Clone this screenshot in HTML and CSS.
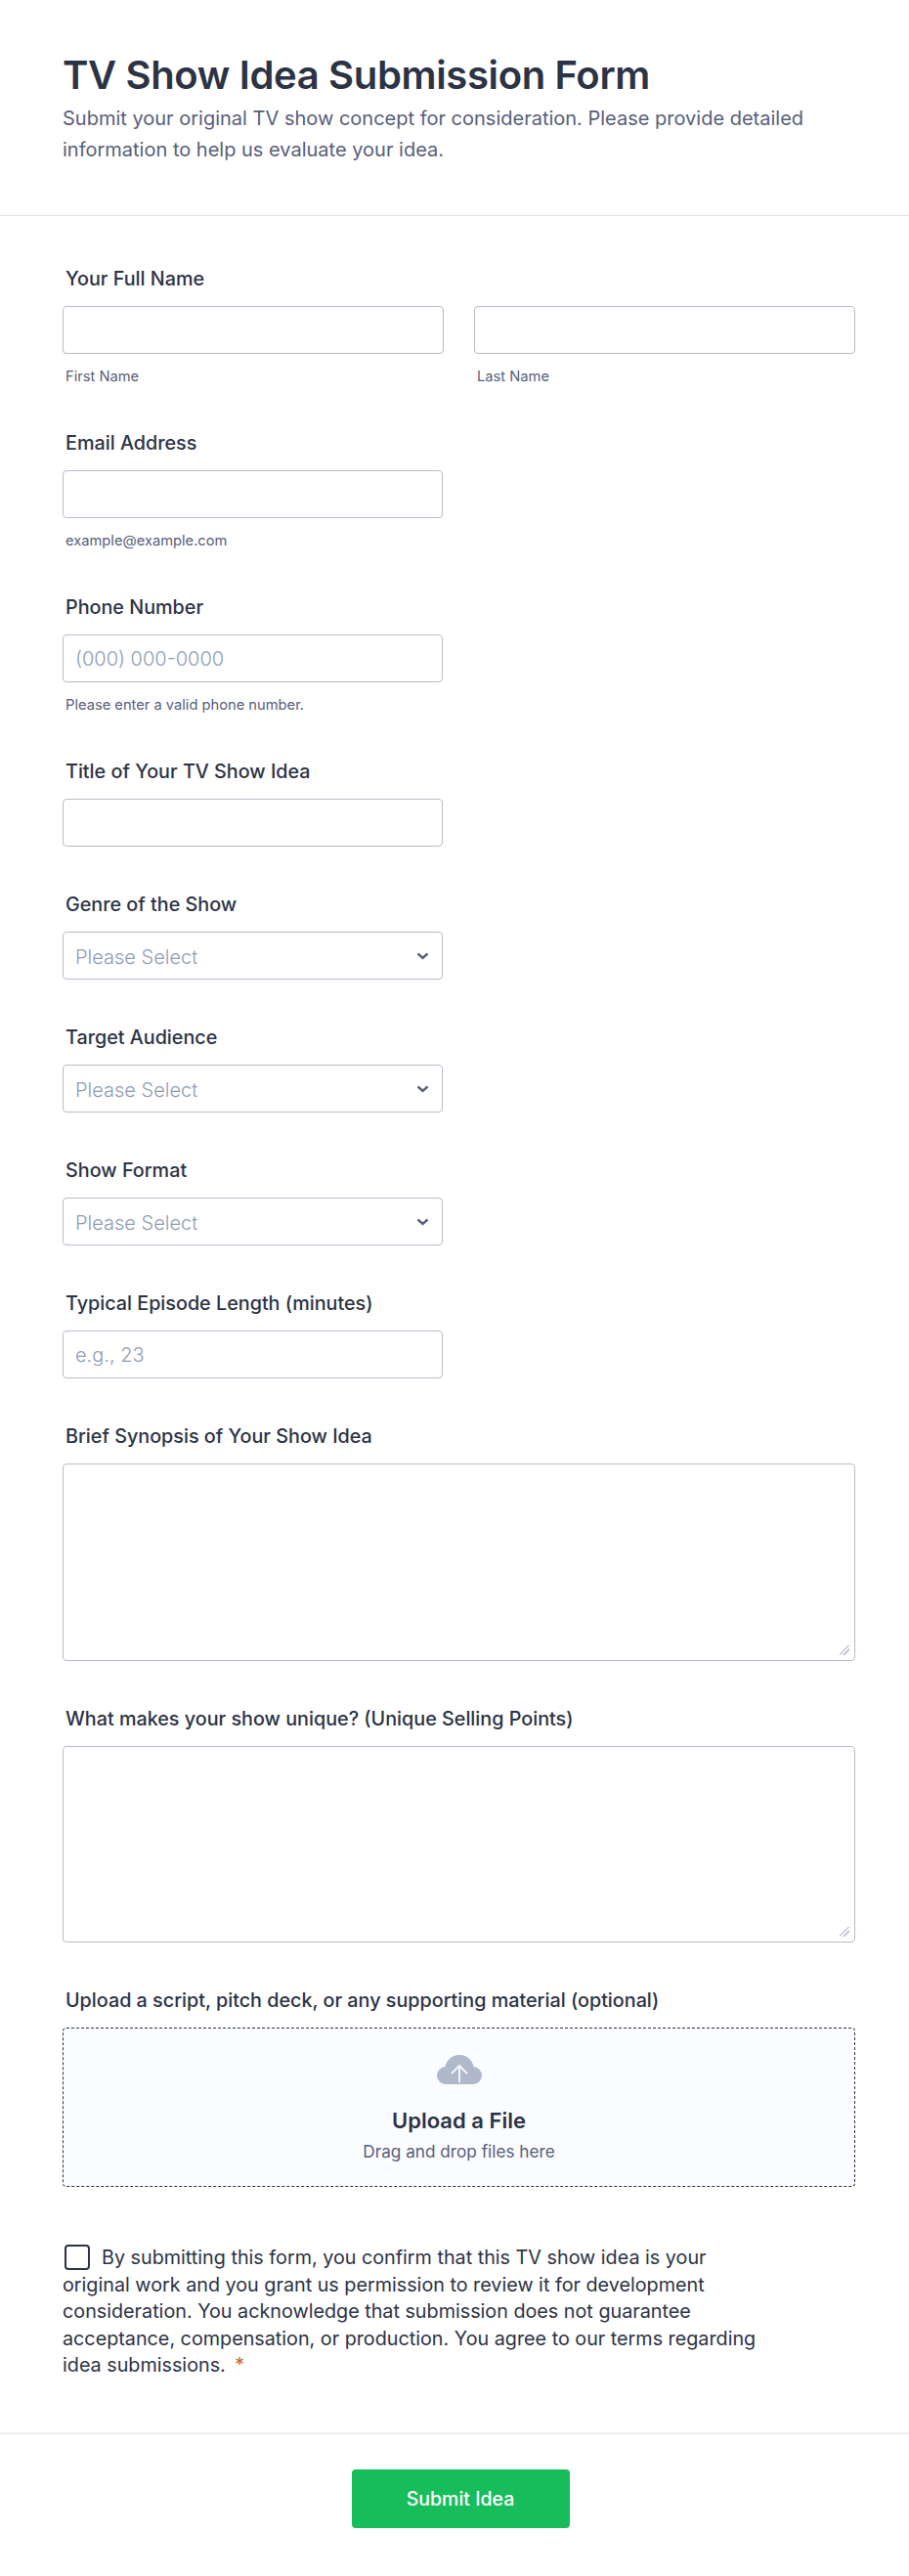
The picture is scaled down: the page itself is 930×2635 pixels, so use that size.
FILE: index.html
```html
<!DOCTYPE html>
<html lang="en">
<head>
    <meta charset="UTF-8">
    <meta name="viewport" content="width=device-width, initial-scale=1.0">
    <title>TV Show Idea Submission Form</title>
    <link rel="stylesheet" href="styles.css">
</head>
<body>
    <form class="form-card">
        <header class="form-header">
            <h1>TV Show Idea Submission Form</h1>
            <p>Submit your original TV show concept for consideration. Please provide detailed information to help us evaluate your idea.</p>
        </header>

        <div class="form-body">
            <div class="field">
                <label class="field-label">Your Full Name</label>
                <div class="name-row">
                    <div class="name-col">
                        <input class="text-input" type="text">
                        <span class="sublabel">First Name</span>
                    </div>
                    <div class="name-col">
                        <input class="text-input" type="text">
                        <span class="sublabel">Last Name</span>
                    </div>
                </div>
            </div>

            <div class="field">
                <label class="field-label">Email Address</label>
                <input class="text-input short" type="email">
                <span class="sublabel">example@example.com</span>
            </div>

            <div class="field">
                <label class="field-label">Phone Number</label>
                <input class="text-input short" type="tel" placeholder="(000) 000-0000">
                <span class="sublabel">Please enter a valid phone number.</span>
            </div>

            <div class="field">
                <label class="field-label">Title of Your TV Show Idea</label>
                <input class="text-input short" type="text">
            </div>

            <div class="field">
                <label class="field-label">Genre of the Show</label>
                <div class="select-box">
                    <span>Please Select</span>
                    <svg class="chevron" viewBox="0 0 13 8"><path d="M1.500 1.500 6.500 6l5-4.500" /></svg>
                </div>
            </div>

            <div class="field">
                <label class="field-label">Target Audience</label>
                <div class="select-box">
                    <span>Please Select</span>
                    <svg class="chevron" viewBox="0 0 13 8"><path d="M1.500 1.500 6.500 6l5-4.500" /></svg>
                </div>
            </div>

            <div class="field">
                <label class="field-label">Show Format</label>
                <div class="select-box">
                    <span>Please Select</span>
                    <svg class="chevron" viewBox="0 0 13 8"><path d="M1.500 1.500 6.500 6l5-4.500" /></svg>
                </div>
            </div>

            <div class="field">
                <label class="field-label">Typical Episode Length (minutes)</label>
                <input class="text-input short" type="text" placeholder="e.g., 23">
            </div>

            <div class="field">
                <label class="field-label">Brief Synopsis of Your Show Idea</label>
                <textarea class="text-area"></textarea>
            </div>

            <div class="field">
                <label class="field-label">What makes your show unique? (Unique Selling Points)</label>
                <textarea class="text-area"></textarea>
            </div>

            <div class="field">
                <label class="field-label">Upload a script, pitch deck, or any supporting material (optional)</label>
                <div class="upload-box">
                    <svg class="cloud" viewBox="0 0 46 30">
                        <circle class="cloud-fill" cx="23" cy="15" r="15" />
                        <circle class="cloud-fill" cx="9" cy="21" r="9" />
                        <circle class="cloud-fill" cx="37" cy="21" r="9" />
                        <rect class="cloud-fill" x="9" y="15" width="28" height="15" />
                        <path class="cloud-arrow" d="M23 28V11M15 19l8-8 8 8" />
                    </svg>
                    <strong>Upload a File</strong>
                    <span>Drag and drop files here</span>
                </div>
            </div>

            <div class="consent">
                <label class="consent-text">
                    <input class="checkbox" type="checkbox">By submitting this form, you confirm that this TV show idea is your original work and you grant us permission to review it for development consideration. You acknowledge that submission does not guarantee acceptance, compensation, or production. You agree to our terms regarding idea submissions. <span class="required">*</span>
                </label>
            </div>
        </div>

        <footer class="form-footer">
            <button class="submit-btn" type="button">Submit Idea</button>
        </footer>
    </form>
</body>
</html>
```

FILE: styles.css
```css
* {
    box-sizing: border-box;
}

body {
    margin: 0;
    background: #fff;
    font-family: Inter, "Noto Sans", sans-serif;
    color: #2c3345;
}

.form-card {
    background: #fff;
}

.form-header {
    height: 221px;
    padding: 52px 64px 0;
    border-bottom: 1px solid #dfe2ea;
}

.form-header h1 {
    margin: 0;
    font-size: 40px;
    font-weight: 600;
    letter-spacing: -0.35px;
    line-height: 50px;
    color: #2c3345;
}

.form-header p {
    margin: 3px 0 0;
    max-width: 802px;
    font-size: 20px;
    line-height: 32px;
    color: #57607a;
}

.form-body {
    padding: 50px 55px 0 64px;
}

.field {
    margin-bottom: 45px;
}

.field-label {
    display: block;
    margin: 0 0 14px 3px;
    font-size: 19.750px;
    font-weight: 500;
    line-height: 28px;
    color: #2c3345;
}

.name-row {
    display: flex;
    gap: 31px;
}

.name-col {
    flex: 1;
}

.text-input {
    display: block;
    width: 100%;
    height: 49px;
    padding: 0 12px;
    border: 1px solid #b8bdc9;
    border-radius: 4px;
    background: #fff;
    font-family: inherit;
    font-size: 20px;
}

.text-input.short {
    width: 389px;
}

.text-input::placeholder {
    color: #8f9db5;
    opacity: 1;
    font-weight: 300;
}

.sublabel {
    display: block;
    margin: 14px 0 0 3px;
    font-size: 14.700px;
    line-height: 18px;
    color: #57607a;
}

.select-box {
    display: flex;
    align-items: center;
    justify-content: space-between;
    width: 389px;
    height: 49px;
    padding: 1px 13px 0 12px;
    border: 1px solid #b8bdc9;
    border-radius: 4px;
    font-size: 20px;
    font-weight: 300;
    color: #8f9db5;
}

.select-box span {
    padding-top: 2px;
}

.chevron {
    width: 13px;
    height: 8px;
    fill: none;
    stroke: #57607a;
    stroke-width: 2.400;
}

.text-area {
    display: block;
    width: 100%;
    height: 201.500px;
    border: 1px solid #b8bdc9;
    border-radius: 4px;
    background: #fff;
    resize: vertical;
}

.text-area::-webkit-resizer {
    background: linear-gradient(135deg, transparent 42%, #c4c8d4 42%, #c4c8d4 54%, transparent 54%, transparent 64%, #c4c8d4 64%, #c4c8d4 76%, transparent 76%) 0 0 / 10px 10px no-repeat;
}

.upload-box {
    display: flex;
    flex-direction: column;
    align-items: center;
    height: 163px;
    padding-top: 27px;
    border: 1px dashed #2c3345;
    border-radius: 4px;
    background: #fbfcff;
}

.cloud {
    width: 46px;
    height: 30px;
}

.cloud-fill {
    fill: #b0b9ca;
}

.cloud-arrow {
    fill: none;
    stroke: #f3f5fa;
    stroke-width: 2;
}

.upload-box strong {
    margin-top: 23px;
    font-size: 22px;
    font-weight: 600;
    line-height: 28px;
    color: #2c3345;
}

.upload-box span {
    margin-top: 6px;
    font-size: 17.200px;
    line-height: 24px;
    color: #57607a;
}

.consent {
    margin-top: 59px;
    max-width: 715px;
}

.consent-text {
    display: block;
    font-size: 19.750px;
    line-height: 27.500px;
    color: #2c3345;
}

.checkbox {
    appearance: none;
    width: 26px;
    height: 26px;
    margin: 0 12px 0 2px;
    border: 2px solid #2c3345;
    border-radius: 4px;
    background: #fff;
    vertical-align: -6px;
}

.required {
    margin-left: 4px;
    color: #c2691f;
}

.form-footer {
    margin-top: 54.500px;
    padding: 36px 0 49px 12px;
    border-top: 2px solid #eceef3;
    text-align: center;
}

.submit-btn {
    display: block;
    width: 223px;
    height: 60px;
    margin: 0 auto;
    border: none;
    border-radius: 4px;
    background: #18bd5b;
    color: #fff;
    font-family: inherit;
    font-size: 19.500px;
    font-weight: 500;
}
```
